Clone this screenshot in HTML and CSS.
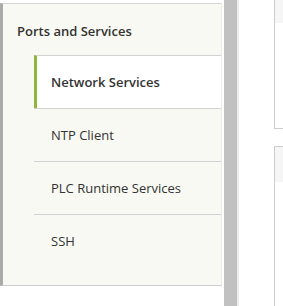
FILE: index.html
```html
<!DOCTYPE html>
<html lang="en">
<head>
    <meta charset="UTF-8">
    <title>Ports and Services</title>
    <link rel="stylesheet" href="styles.css">
</head>
<body>
    <div class="layout">
        <aside class="sidebar">
            <h2 class="group-title">Ports and Services</h2>
            <ul class="nav">
                <li class="nav-item active">Network Services</li>
                <li class="nav-item">NTP Client</li>
                <li class="nav-item">PLC Runtime Services</li>
                <li class="nav-item">SSH</li>
            </ul>
        </aside>
        <div class="scrollbar"></div>
        <main class="content">
            <div class="card first"></div>
            <div class="card second">
                <div class="card-head"></div>
            </div>
        </main>
    </div>
</body>
</html>
```

FILE: styles.css
```css
body {
    margin: 0;
    font-family: 'Open Sans', 'Segoe UI', sans-serif;
    font-size: 13px;
    color: #333;
    background: #fff;
    height: 306px;
    overflow: hidden;
}
.layout {
    display: flex;
    height: 306px;
}
.sidebar {
    width: 222px;
    flex-shrink: 0;
    margin-top: 3px;
    height: 283px;
    box-sizing: border-box;
    background: #f8f9f2;
    border-top: 1px solid #d4d4d4;
    border-bottom: 1px solid #cfcfcf;
    border-left: 3px solid #aaaaaa;
    border-right: 1px solid #ececec;
}
.group-title {
    margin: 0;
    padding: 18px 0 0 14px;
    height: 51px;
    box-sizing: border-box;
    font-size: 13px;
    font-weight: 600;
    color: #333;
}
.nav {
    list-style: none;
    margin: 0 0 0 31px;
    padding: 0;
}
.nav-item {
    height: 53px;
    line-height: 52px;
    padding-left: 17px;
    border-top: 1px solid #d2d2d2;
    box-sizing: border-box;
    color: #333;
}
.nav-item.active {
    background: #fff;
    font-weight: 600;
    border-left: 3px solid #8cb63c;
    padding-left: 14px;
}
.scrollbar {
    width: 13px;
    flex-shrink: 0;
    margin-left: 2px;
    background: #c1c1c1;
    border-right: 2px solid #ececec;
}
.content {
    flex: 1;
    padding-left: 35px;
    display: flex;
    flex-direction: column;
}
.card {
    border-left: 1px solid #cccccc;
    background: #fff;
}
.card.first {
    height: 128px;
    flex-shrink: 0;
    border-bottom: 1px solid #cccccc;
    background: linear-gradient(#f5f5f5 0 23px, #fff 23px);
}
.card.second {
    margin-top: 17px;
    flex: 1;
    border-top: 1px solid #cccccc;
}
.card-head {
    height: 35px;
    background: #f5f5f5;
}
```
